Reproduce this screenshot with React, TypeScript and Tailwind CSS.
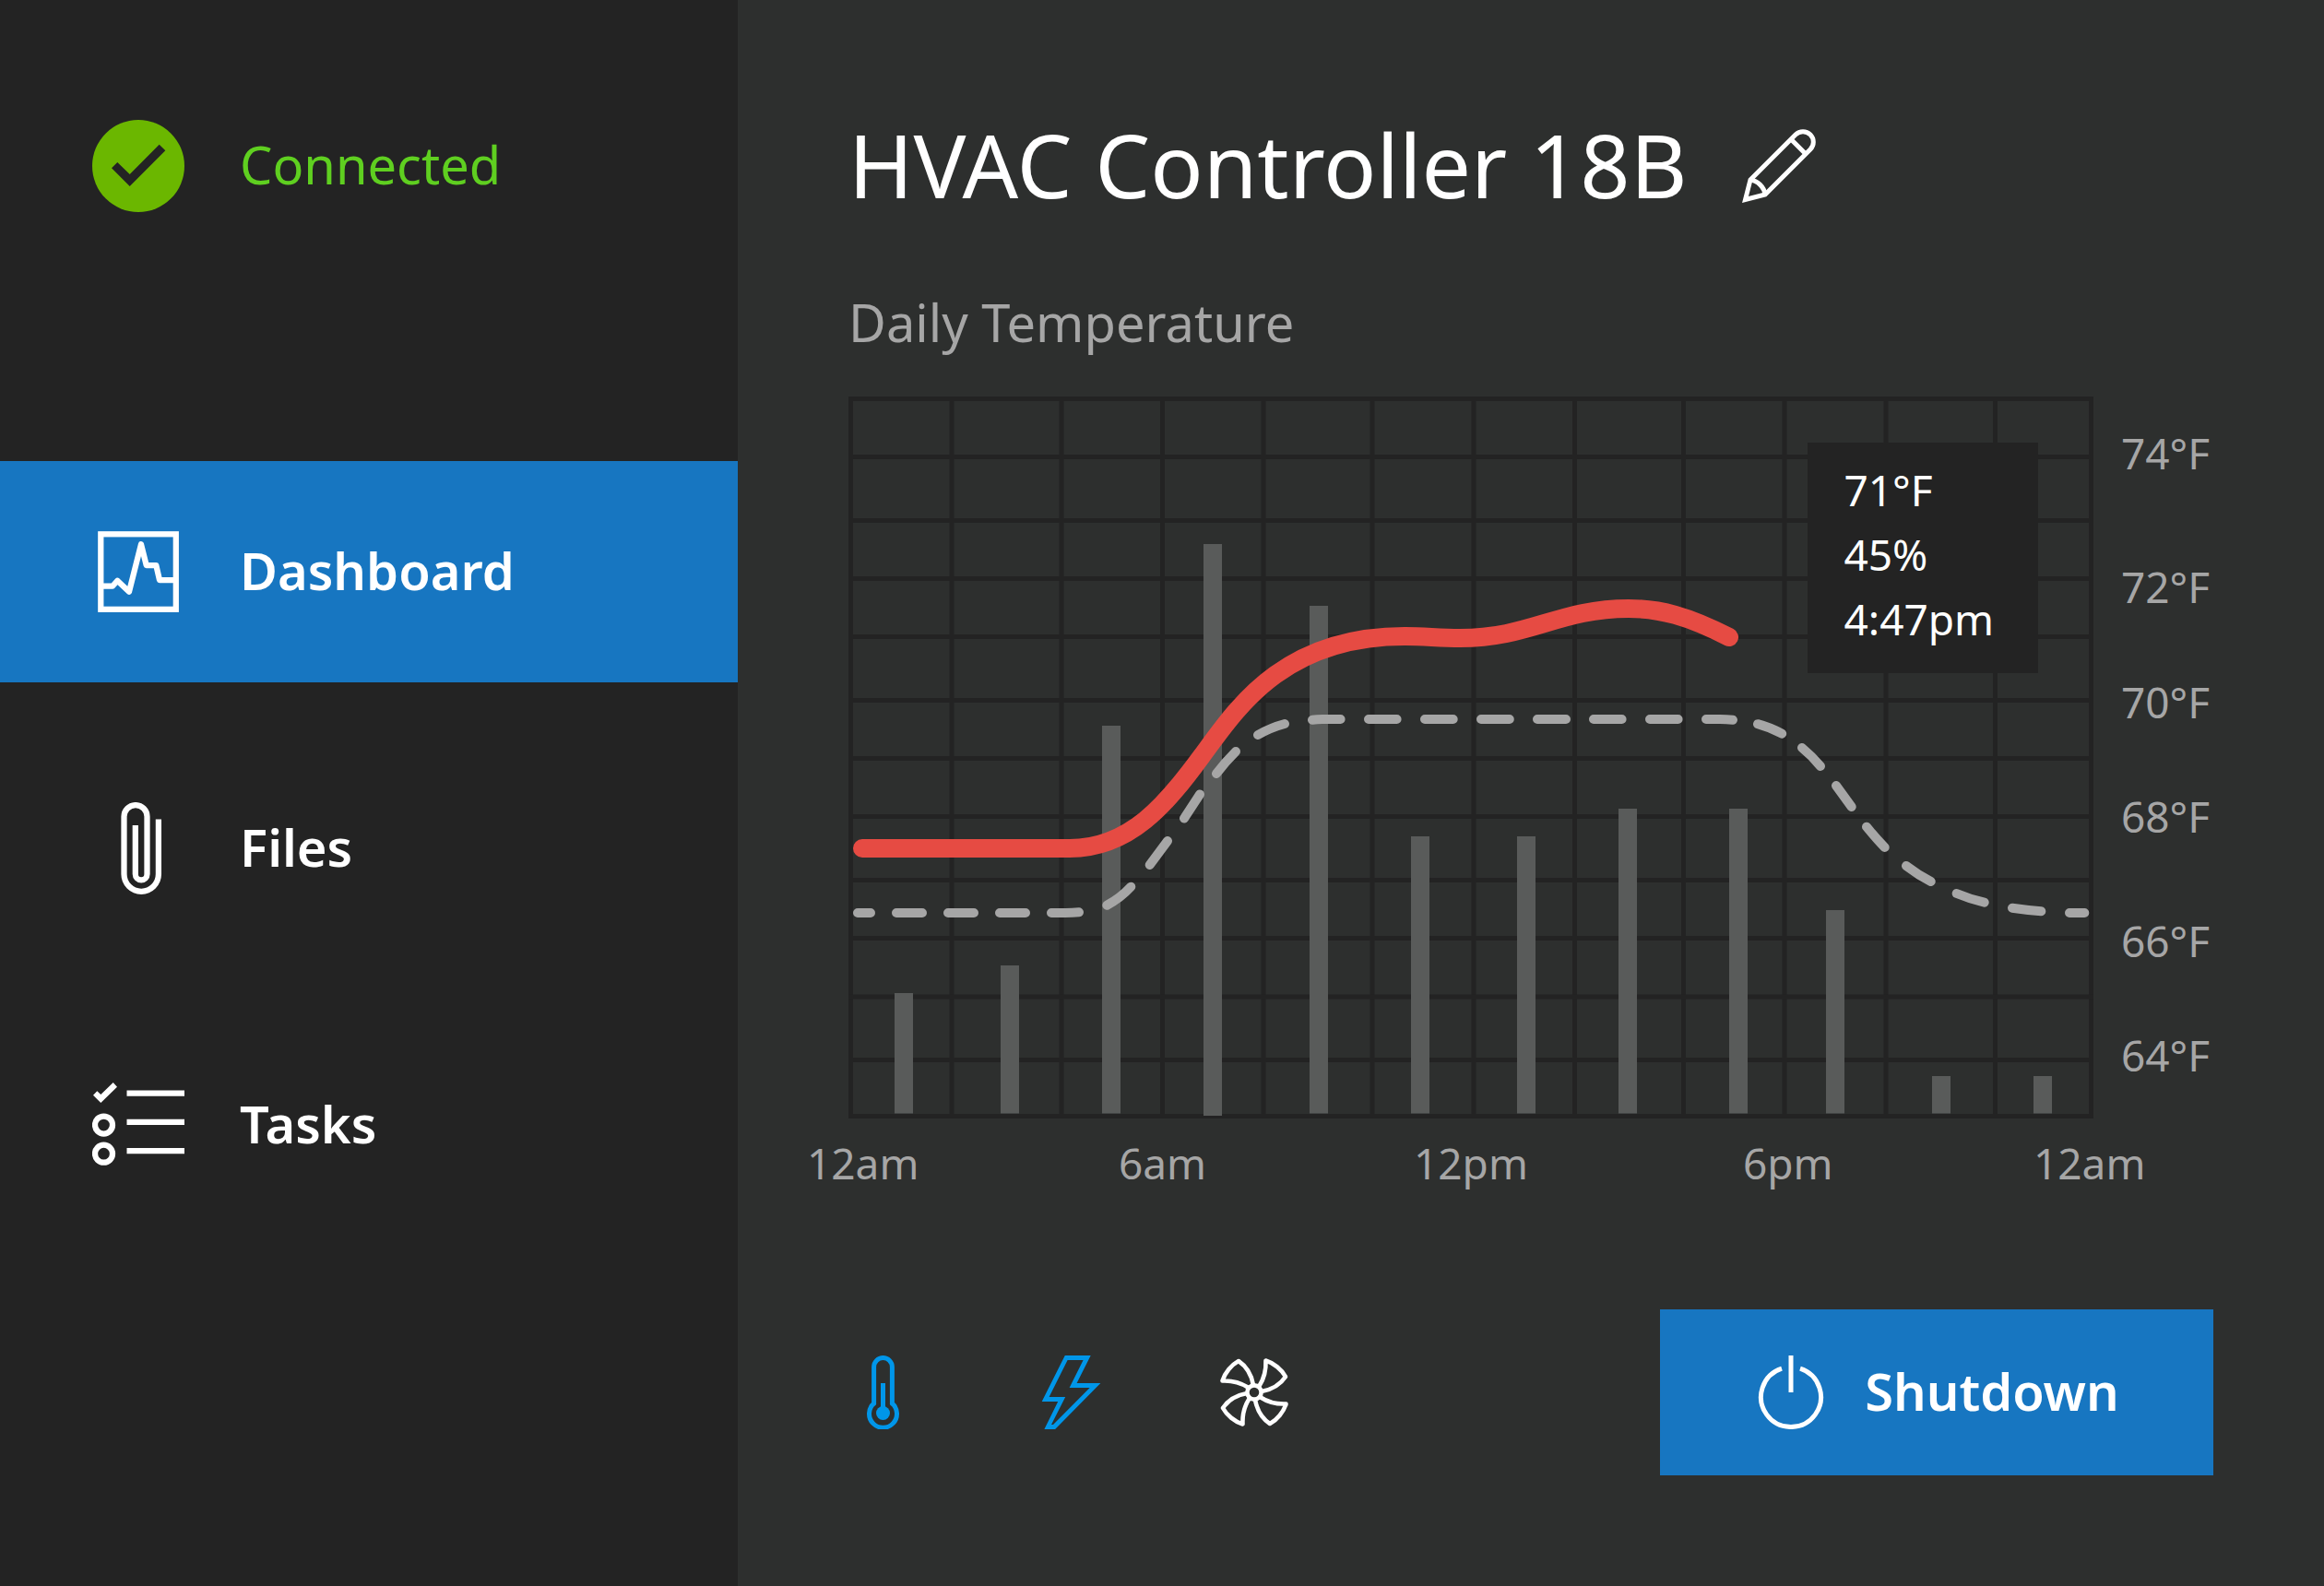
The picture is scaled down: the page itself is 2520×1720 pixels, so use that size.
import type { ReactNode } from "react";

function ConnectedIcon() {
  return (
    <svg viewBox="0 0 100 100" className="size-[100px] shrink-0" aria-hidden="true">
      <circle cx="50" cy="50" r="50" fill="#6bb700" />
      <path d="M21 52.3 27.3 46 40.7 59 72.7 26.7 79.3 33.3 40.7 72Z" fill="#232323" />
    </svg>
  );
}

function DashboardIcon() {
  return (
    <svg viewBox="0 0 100 100" className="size-[100px] shrink-0" fill="none" stroke="currentColor" strokeWidth="6.25" aria-hidden="true">
      <rect x="9.3" y="9.3" width="81.5" height="81.5" />
      <path d="M12 65.7H22L27.3 59.7 40 71.7 53 20.3 58.7 43H69.3L73 59H88" strokeLinejoin="round" />
    </svg>
  );
}

function FilesIcon() {
  return (
    <svg viewBox="0 0 100 100" className="size-[100px] shrink-0" fill="none" stroke="currentColor" strokeWidth="6.25" aria-hidden="true">
      <path d="M46.8 25V78.1A6.35 6.35 0 0 0 59.5 78.1V15.6A12.5 12.5 0 0 0 34.5 15.6V78.1A18.7 18.7 0 0 0 71.9 78.1V18.5" />
    </svg>
  );
}

function TasksIcon() {
  return (
    <svg viewBox="0 0 100 100" className="size-[100px] shrink-0" fill="none" stroke="currentColor" strokeWidth="6.25" aria-hidden="true">
      <path d="M1 17.7 5.3 13.3 9.3 17 22.7 4 27 8.7 9.3 26Z" fill="currentColor" stroke="none" />
      <circle cx="12.5" cy="50" r="9.5" />
      <circle cx="12.5" cy="81.2" r="9.5" />
      <path d="M37.5 15.6H100M37.5 46.8H100M37.5 78.2H100" />
    </svg>
  );
}

function PencilIcon() {
  return (
    <svg viewBox="0 0 80 80" className="size-20" fill="none" stroke="currentColor" strokeWidth="5" aria-hidden="true">
      <path d="M3.5 76.5 9 55 58 6A11.3 11.3 0 0 1 74 22L25 71Z" />
      <path d="M53 11 69 27M9 55C17 56 24 63 25 71" />
    </svg>
  );
}

function ThermometerIcon() {
  return (
    <svg viewBox="0 0 80 80" className="size-20" fill="none" stroke="currentColor" strokeWidth="5" aria-hidden="true">
      <path d="M27.6 52V12.4A9.9 9.9 0 0 1 47.4 12.4V52A15 15 0 1 1 27.6 52Z" />
      <path d="M37.5 30V60" />
      <circle cx="37.5" cy="62.5" r="7.5" fill="currentColor" stroke="none" />
    </svg>
  );
}

function BoltIcon() {
  return (
    <svg viewBox="0 0 80 80" className="size-20" fill="currentColor" aria-hidden="true">
      <path
        fillRule="evenodd"
        d="M34.8 0H62.7L47.6 30H73.4L24.1 80H12.4L27.2 50H9.7ZM37.6 5 17.6 45H35.2L20 75H22L61.7 35H39.6L54.6 5Z"
      />
    </svg>
  );
}

function FanIcon() {
  const blade = "M45.5 33C50 26 53 16 52.5 5.5C61 8 70 15.5 74 23C68 32 59 37 48 39";
  return (
    <svg viewBox="0 0 80 80" className="size-20" fill="none" stroke="currentColor" strokeWidth="4.6" strokeLinejoin="round" aria-hidden="true">
      <circle cx="40" cy="40" r="7.6" />
      <path d={blade} />
      <path d={blade} transform="rotate(90 40 40)" />
      <path d={blade} transform="rotate(180 40 40)" />
      <path d={blade} transform="rotate(270 40 40)" />
    </svg>
  );
}

function PowerIcon() {
  return (
    <svg viewBox="0 0 80 80" className="size-20" fill="none" stroke="currentColor" strokeWidth="5" aria-hidden="true">
      <path d="M40 0V40M30 14.1A32.5 32.5 0 1 0 50 14.1" />
    </svg>
  );
}

const columns = [2.5, 112, 231, 340.5, 450, 568, 678, 787.5, 905.5, 1015, 1125, 1243.5, 1347.5];
const rows = [2.5, 65.5, 134.5, 197.5, 260.5, 329.5, 392.5, 455.5, 524.5, 587.5, 651, 719.5, 780.5];
const bars = [
  { x: 50, y: 647 },
  { x: 165, y: 617 },
  { x: 275, y: 357 },
  { x: 385, y: 160 },
  { x: 500, y: 227 },
  { x: 610, y: 477 },
  { x: 725, y: 477 },
  { x: 835, y: 447 },
  { x: 955, y: 447 },
  { x: 1060, y: 557 },
  { x: 1175, y: 737 },
  { x: 1285, y: 737 },
];

const setpointDashes =
  "M10 560H24M52 560H80M108 560H136M164 560H192M220 560H235Q243 560 250 559.3" +
  "M280.3 551.7Q295 544 306.3 531.7M326.7 508 346 482M364 457.5 381 431.5M399 409Q408 397 420 385M444 367Q458 359 473 355" +
  "M503 350.7Q508 350 514 350H533.6M564 350H594.6M625 350H655.7M686 350H716.8M747 350H778M808 350H838.6M869 350H899.6M930 350H945Q952 350 959 350.8" +
  "M986 355.2Q1000 359 1012.2 365.7M1034 381Q1045 390 1054 401M1071 422 1087.7 445M1104 466.7Q1114 479 1123.7 489M1147 509Q1160 519 1173.7 526" +
  "M1201.7 539Q1216 545 1231.7 548.7M1262 554.7Q1278 557 1293.3 558.3M1324 560H1340.3";

function TemperatureChart() {
  return (
    <svg viewBox="0 0 1350 783" className="block w-full" role="img" aria-label="Daily temperature" fill="none">
      <g stroke="#232323" strokeWidth="5">
        {columns.map((x) => (
          <path key={x} d={`M${x} 0V783`} />
        ))}
        {rows.map((y) => (
          <path key={y} d={`M0 ${y}H1350`} />
        ))}
      </g>
      <g fill="#595b5a">
        {bars.map((bar, i) => (
          <rect key={bar.x} x={bar.x} y={bar.y} width="20" height={(i === 3 ? 780 : 777.5) - bar.y} />
        ))}
      </g>
      <path d={setpointDashes} stroke="#a6a6a6" strokeWidth="10" strokeLinecap="round" strokeLinejoin="round" />
      <path
        d="M15 490H240C305 490 345 442 383 390C420 340 470 260 603 260C625 260 640 262 663 262C740 262 770 230 846 230C880 230 910 238 955 261"
        stroke="#e64b43"
        strokeWidth="20"
        strokeLinecap="round"
        strokeLinejoin="round"
      />
    </svg>
  );
}

function NavItem({ icon, label, active }: { icon: ReactNode; label: string; active?: boolean }) {
  return (
    <a
      href="#"
      aria-current={active ? "page" : undefined}
      className={`flex h-[240px] items-center gap-[60px] px-[100px] text-[56px] leading-[70px] font-semibold text-white ${active ? "bg-[#1776c1]" : ""}`}
    >
      {icon}
      <span className="pb-1">{label}</span>
    </a>
  );
}

export default function App() {
  return (
    <div className="flex min-h-screen bg-[#2d2f2e] font-['Noto_Sans','Open_Sans',sans-serif] text-white">
      <aside className="w-[800px] shrink-0 bg-[#232323] pt-[130px]">
        <div className="flex items-center gap-[60px] px-[100px] text-[56px] leading-[70px] text-[#5fcf20]">
          <ConnectedIcon />
          <span className="pb-1">Connected</span>
        </div>
        <nav className="mt-[270px] flex flex-col gap-[60px]">
          <NavItem icon={<DashboardIcon />} label="Dashboard" active />
          <NavItem icon={<FilesIcon />} label="Files" />
          <NavItem icon={<TasksIcon />} label="Tasks" />
        </nav>
      </aside>

      <main className="min-w-0 flex-1 px-[120px] pt-[130px] pb-[120px]">
        <header className="flex items-start gap-[60px]">
          <h1 className="text-[95px] leading-[96px]">HVAC Controller 18B</h1>
          <button type="button" aria-label="Rename" className="mt-2.5">
            <PencilIcon />
          </button>
        </header>

        <h2 className="mt-[88px] text-[56px] leading-[70px] text-[#a6a6a6]">Daily Temperature</h2>

        <section className="mt-[46px] text-[46px] text-[#a6a6a6]">
          <div className="flex">
            <div className="relative min-w-0 flex-1">
              <TemperatureChart />
              <div className="absolute top-[50px] left-[77%] flex size-[250px] flex-col bg-[#232323] px-10 py-4 leading-[70px] text-white">
                <span>71°F</span>
                <span>45%</span>
                <span>4:47pm</span>
              </div>
            </div>
            <div className="grid w-[130px] shrink-0 grid-rows-[145fr_125fr_124fr_135fr_124fr_104fr] pt-[26px] pl-[30px] leading-[70px]">
              <span>74°F</span>
              <span>72°F</span>
              <span>70°F</span>
              <span>68°F</span>
              <span>66°F</span>
              <span>64°F</span>
            </div>
          </div>
          <div className="mt-[18px] mr-[70px] -ml-[45px] grid grid-cols-[338fr_320fr_357fr_315fr_125fr] leading-[60px]">
            <span>12am</span>
            <span>6am</span>
            <span>12pm</span>
            <span>6pm</span>
            <span>12am</span>
          </div>
        </section>

        <footer className="mt-[129px] flex items-center justify-between">
          <div className="flex gap-[120px]">
            <button type="button" aria-label="Temperature" className="text-[#0096e9]">
              <ThermometerIcon />
            </button>
            <button type="button" aria-label="Power" className="text-[#0096e9]">
              <BoltIcon />
            </button>
            <button type="button" aria-label="Fan">
              <FanIcon />
            </button>
          </div>
          <button
            type="button"
            className="flex h-[180px] w-[600px] items-center justify-center gap-10 bg-[#1776c1] text-[56px] leading-[70px] font-semibold"
          >
            <PowerIcon />
            <span className="pb-1">Shutdown</span>
          </button>
        </footer>
      </main>
    </div>
  );
}
